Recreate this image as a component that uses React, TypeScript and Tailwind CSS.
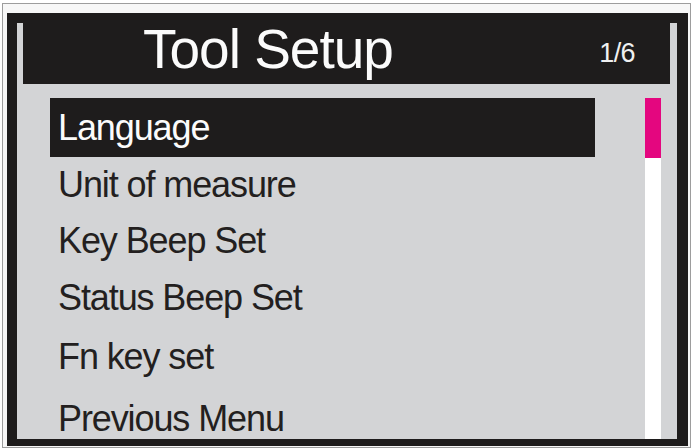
const rows = [
  { label: "Language", h: "h-[59px] leading-[59px]", active: true },
  { label: "Unit of measure", h: "h-[56px] leading-[56px]" },
  { label: "Key Beep Set", h: "h-[56px] leading-[56px]" },
  { label: "Status Beep Set", h: "h-[57px] leading-[57px]" },
  { label: "Fn key set", h: "h-[61px] leading-[61px]" },
  { label: "Previous Menu", h: "h-[52px] pt-[12px] leading-[40px]" },
];

export default function App() {
  return (
    <div
      className="w-[693px] h-[448px] bg-white pt-[3px] pl-[2px] overflow-hidden"
      style={{ fontFamily: '"Liberation Sans", Arial, sans-serif' }}
    >
      {/* outer photo edge */}
      <div className="w-[689px] h-[445px] border border-[#9d9d9d] bg-[#f7f7f7] pt-[9px] pl-[4px]">
        {/* device bezel */}
        <div className="w-[681px] h-[433px] bg-[#1e1c1c] pt-[10px] pl-[10px]">
          {/* screen */}
          <div className="w-[660px] h-[416px] bg-[#d3d4d6] flex flex-col">
            {/* title bar */}
            <div className="ml-[6px] mr-[7px] h-[61px] shrink-0 bg-[#1e1c1c] flex justify-between">
              <div className="pl-[120px] text-[55px] leading-[56px] -mt-[2px] tracking-[-1px] text-[#fbfbfb]">
                Tool Setup
              </div>
              <div className="pr-[35px] mt-[15px] text-[27px] leading-[30px] tracking-[-0.6px] text-[#f0f0f0]">
                1/6
              </div>
            </div>

            {/* menu + scrollbar */}
            <div className="flex flex-1 pt-[14px] pl-[33px] min-h-0">
              <div className="w-[545px] flex flex-col">
                {rows.map((r) => (
                  <div
                    key={r.label}
                    className={`${r.h} shrink-0 pl-[8px] text-[36px] tracking-[-1.1px] whitespace-nowrap ${
                      r.active ? "bg-[#1e1c1c] text-[#fbfbfb]" : "text-[#231f20]"
                    }`}
                  >
                    {r.label}
                  </div>
                ))}
              </div>
              <div className="ml-[50px] w-[16px] bg-white flex flex-col">
                <div className="h-[60px] bg-[#e4067f]" />
              </div>
            </div>
          </div>
        </div>
      </div>
    </div>
  );
}
